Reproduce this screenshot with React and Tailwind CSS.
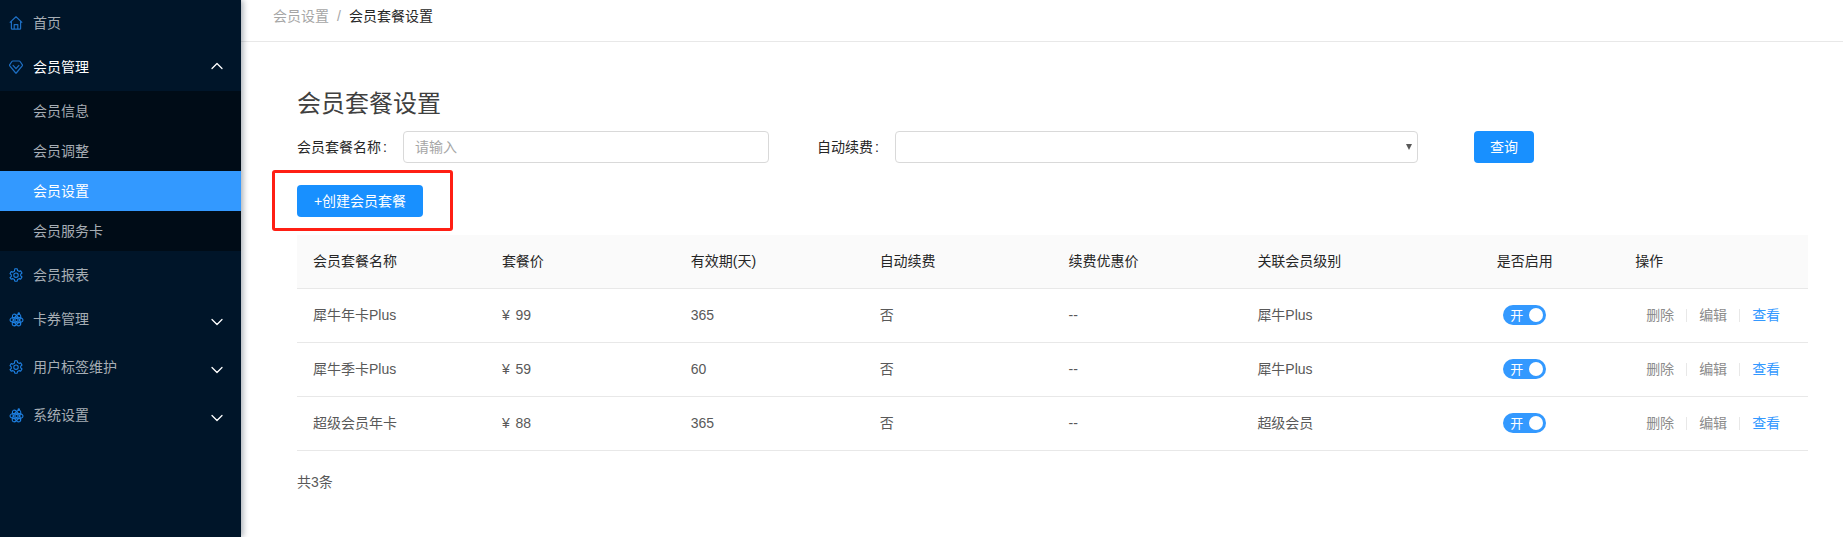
import { ChevronDown, ChevronUp } from 'lucide-react';

const font = { fontFamily: '"Liberation Sans", "Noto Sans CJK SC", sans-serif' };

const rows = [
  { name: '犀牛年卡Plus', price: '99', days: '365', level: '犀牛Plus' },
  { name: '犀牛季卡Plus', price: '59', days: '60', level: '犀牛Plus' },
  { name: '超级会员年卡', price: '88', days: '365', level: '超级会员' },
];

const subItems = ['会员信息', '会员调整', '会员设置', '会员服务卡'];

function HomeIcon() {
  return (
    <svg width="14" height="14" viewBox="0 0 14 14" fill="none" stroke="#1d6fc4" strokeWidth="1.2" strokeLinejoin="round">
      <path d="M.8 6.600 7 .8l6.200 5.800M2.400 5.400v7.100c0 .4.300.7.700.7h7.800c.4 0 .7-.3.700-.7V5.400M5.200 13.200V8.600h3.600v4.600" />
    </svg>
  );
}

function DiamondIcon() {
  return (
    <svg width="14" height="14" viewBox="0 0 14 14" fill="none" stroke="#1d6fc4" strokeWidth="1.2" strokeLinejoin="round">
      <path d="M3.800 1h6.400c.4 0 .7.200.9.500l2.300 3.300c.2.300.2.600 0 .9L7.300 13c-.2.200-.4.200-.6 0L.6 5.700c-.2-.3-.2-.6 0-.9l2.300-3.300c.2-.3.500-.5.900-.5z" />
      <path d="M3.800 5.200 7 8.700l3.200-3.500" />
    </svg>
  );
}

function GearIcon() {
  return (
    <svg width="14" height="14" viewBox="0 0 14 14" fill="none" stroke="#1d7fe0" strokeWidth="1.1" strokeLinejoin="round">
      <path d="M5.800.8h2.400l.4 1.700 1.500.9 1.700-.5 1.200 2.100-1.300 1.200v1.600l1.300 1.200-1.200 2.100-1.700-.5-1.500.9-.4 1.700H5.800l-.4-1.700-1.500-.9-1.700.5L1 9.700l1.300-1.200V6.900L1 5.700l1.200-2.100 1.700.5 1.500-.9z" />
      <circle cx="7" cy="7.200" r="2.200" />
    </svg>
  );
}

function AtomIcon() {
  return (
    <svg width="15" height="15" viewBox="0 0 15 15" fill="none" stroke="#1d7fe0" strokeWidth="1.100">
      <ellipse cx="7.500" cy="8" rx="6.500" ry="2.800" />
      <ellipse cx="7.500" cy="8" rx="6.500" ry="2.800" transform="rotate(60 7.500 8)" />
      <ellipse cx="7.500" cy="8" rx="6.500" ry="2.800" transform="rotate(120 7.500 8)" />
      <circle cx="7.500" cy="8" r="1.600" />
      <circle cx="9.800" cy="1.400" r="1.200" fill="#1d7fe0" stroke="none" />
    </svg>
  );
}

function Toggle() {
  return (
    <div className="mx-auto flex h-5 w-[43px] items-center justify-between rounded-full bg-[#3399ff] pl-[7px] pr-[3px]">
      <span className="text-[13px] leading-none text-white">开</span>
      <span className="h-[14px] w-[14px] rounded-full bg-white" />
    </div>
  );
}

function MenuRow({ icon, label, height, chevron, active }) {
  return (
    <div className={`flex items-center pl-[9px] pr-[14px] ${height}`}>
      <span className="flex w-[24px] shrink-0">{icon}</span>
      <span className={active ? 'text-white' : 'text-[#a6adb4]'}>{label}</span>
      {chevron === 'down' && <ChevronDown size={20} strokeWidth={1.5} className="ml-auto mt-[6px] text-white" />}
      {chevron === 'up' && <ChevronUp size={20} strokeWidth={1.5} className="ml-auto mb-[2px] text-white" />}
    </div>
  );
}

function Sidebar() {
  return (
    <aside className="z-10 h-[537px] w-[241px] shrink-0 bg-[#001529] text-sm shadow-[2px_0_6px_rgba(0,21,41,0.35)]">
      <MenuRow icon={<HomeIcon />} label="首页" height="h-[46px]" />
      <MenuRow icon={<DiamondIcon />} label="会员管理" height="h-[45px] pb-[3px]" chevron="up" active />
      <div className="bg-[#000c17]">
        {subItems.map((item) => (
          <div
            key={item}
            className={`flex h-10 items-center pl-[33px] ${item === '会员设置' ? 'bg-[#3399ff] text-white' : 'text-[#a6adb4]'}`}
          >
            {item}
          </div>
        ))}
      </div>
      <MenuRow icon={<GearIcon />} label="会员报表" height="h-[44px] pt-[4px]" />
      <MenuRow icon={<AtomIcon />} label="卡券管理" height="h-[48px]" chevron="down" />
      <MenuRow icon={<GearIcon />} label="用户标签维护" height="h-[48px]" chevron="down" />
      <MenuRow icon={<AtomIcon />} label="系统设置" height="h-[48px]" chevron="down" />
    </aside>
  );
}

function Actions() {
  return (
    <div className="flex items-center pl-[11px] text-[#8c8c8c]">
      <span>删除</span>
      <span className="mx-[12px] h-[13px] w-px bg-[#e8e8e8]" />
      <span>编辑</span>
      <span className="mx-[12px] h-[13px] w-px bg-[#e8e8e8]" />
      <span className="text-[#3399ff]">查看</span>
    </div>
  );
}

export default function App() {
  const th = 'px-4 font-normal';
  const td = 'px-4';
  return (
    <div className="flex h-[537px] w-[1843px] overflow-hidden bg-white text-sm" style={font}>
      <Sidebar />
      <main className="min-w-0 flex-1">
        <div className="flex h-[42px] items-center border-b border-[#e8e8e8] pb-[10px] pl-[32px]">
          <span className="text-[#a6a6a6]">会员设置</span>
          <span className="mx-[8px] text-[#a6a6a6]">/</span>
          <span className="text-[#262626]">会员套餐设置</span>
        </div>

        <div className="pl-[56px] pr-[35px]">
          <h1 className="mt-[44px] h-[36px] text-2xl leading-[36px] font-normal text-[#404040]">会员套餐设置</h1>

          <div className="mt-[9px] flex h-8 items-center text-[#262626]">
            <span className="w-[106px] shrink-0">会员套餐名称<span className="ml-[2px]">:</span></span>
            <div className="flex h-8 w-[366px] items-center rounded border border-[#d9d9d9] pl-[11px] text-[#a6a6a6]">请输入</div>
            <span className="ml-[48px] w-[78px] shrink-0">自动续费<span className="ml-[2px]">:</span></span>
            <div className="flex h-8 w-[523px] items-center justify-end rounded border border-[#d9d9d9] pr-[5px]">
              <span className="h-0 w-0 border-x-[3.500px] border-t-[6px] border-x-transparent border-t-[#595959]" />
            </div>
            <button className="ml-[56px] h-8 w-[60px] rounded bg-[#1890ff] text-white">查询</button>
          </div>

          {/* 标注的红框 */}
          <div className="-ml-[25px] mt-[7px] flex h-[61px] w-[181px] items-center rounded-[3px] border-[3px] border-[#ff1f14] pl-[22px]">
            <button className="h-8 w-[126px] rounded bg-[#1890ff] text-white">+创建会员套餐</button>
          </div>

          <table className="mt-[4px] w-full table-fixed border-collapse">
            <thead>
              <tr className="h-[53px] border-b border-[#e8e8e8] bg-[#fafafa] text-[#262626]">
                <th className={`${th} text-left`}>会员套餐名称</th>
                <th className={`${th} text-left`}>套餐价</th>
                <th className={`${th} text-left`}>有效期(天)</th>
                <th className={`${th} text-left`}>自动续费</th>
                <th className={`${th} text-left`}>续费优惠价</th>
                <th className={`${th} text-left`}>关联会员级别</th>
                <th className={`${th} text-center`}>是否启用</th>
                <th className={`${th} text-left`}>操作</th>
              </tr>
            </thead>
            <tbody className="text-[#595959]">
              {rows.map((row) => (
                <tr key={row.name} className="h-[54px] border-b border-[#e8e8e8]">
                  <td className={td}>{row.name}</td>
                  <td className={td}><span className="mr-[2px]">¥</span> {row.price}</td>
                  <td className={td}>{row.days}</td>
                  <td className={td}>否</td>
                  <td className={td}>--</td>
                  <td className={td}>{row.level}</td>
                  <td className={td}><Toggle /></td>
                  <td className={td}><Actions /></td>
                </tr>
              ))}
            </tbody>
          </table>

          <p className="mt-[21px] text-[#595959]">共3条</p>
        </div>
      </main>
    </div>
  );
}
